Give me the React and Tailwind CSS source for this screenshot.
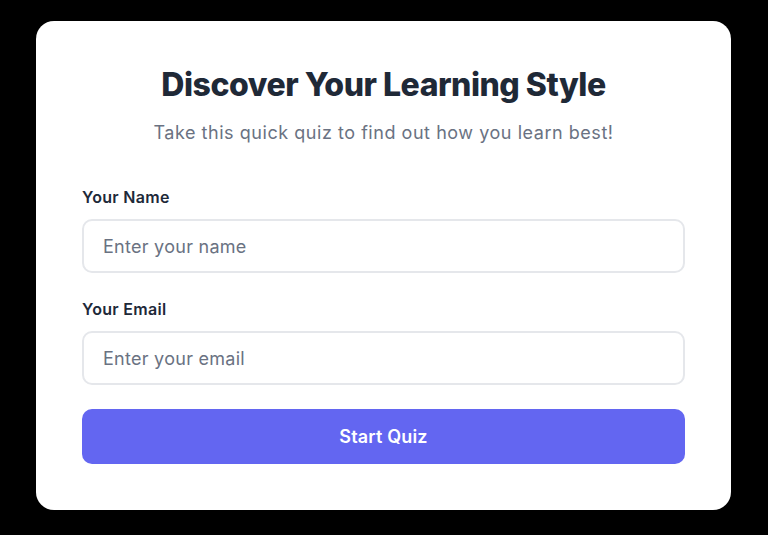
import React, { useState } from 'react';

export default function App() {
  const [name, setName] = useState('');
  const [email, setEmail] = useState('');

  return (
    <div className="min-h-screen w-full bg-black pt-[21px] pl-[36px] font-['Inter',sans-serif]">
      <div className="w-[695px] rounded-[18px] bg-white px-[46px] pt-[46px] pb-[46px]">
        <h1 className="text-center text-[32px] leading-[36px] font-extrabold tracking-[-0.015em] text-[#1f2937]">
          Discover Your Learning Style
        </h1>
        <p className="mt-4 text-center text-lg leading-7 tracking-[0.03em] text-gray-500">
          Take this quick quiz to find out how you learn best!
        </p>

        <form className="mt-[38px] flex flex-col" onSubmit={(e) => e.preventDefault()}>
          <label className="text-base leading-6 font-semibold tracking-[0.02em] text-gray-800">Your Name</label>
          <input
            type="text"
            value={name}
            onChange={(e) => setName(e.target.value)}
            placeholder="Enter your name"
            className="mt-[10px] h-[54px] w-full rounded-[10px] border-2 border-gray-200 px-[19px] text-lg tracking-[0.015em] text-gray-800 placeholder:text-gray-500 focus:outline-none"
          />

          <label className="mt-6 text-base leading-6 font-semibold tracking-[0.02em] text-gray-800">Your Email</label>
          <input
            type="email"
            value={email}
            onChange={(e) => setEmail(e.target.value)}
            placeholder="Enter your email"
            className="mt-[10px] h-[54px] w-full rounded-[10px] border-2 border-gray-200 px-[19px] text-lg tracking-[0.015em] text-gray-800 placeholder:text-gray-500 focus:outline-none"
          />

          <button
            type="submit"
            className="mt-6 h-[55px] w-full rounded-[10px] bg-[#6366f1] text-lg font-semibold tracking-[0.01em] text-white"
          >
            Start Quiz
          </button>
        </form>
      </div>
    </div>
  );
}
